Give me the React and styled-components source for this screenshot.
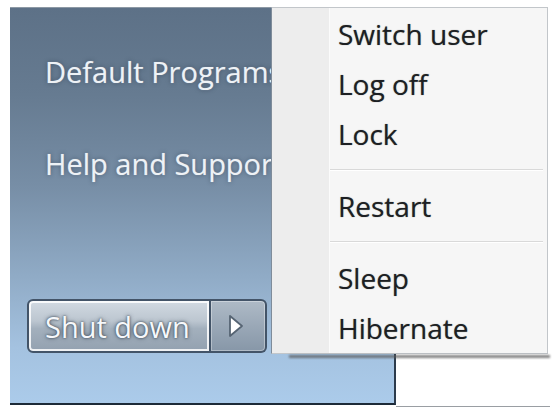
import React from "react";
import styled, { createGlobalStyle } from "styled-components";

const Global = createGlobalStyle`
  html, body { margin: 0; padding: 0; background: #ffffff; }
  body {
    width: 554px;
    height: 412px;
    overflow: hidden;
    font-family: "Open Sans", "Noto Sans", sans-serif;
  }
`;

const Screen = styled.div`
  position: relative;
  width: 554px;
  height: 412px;
  box-sizing: border-box;
  padding: 7px 4px 0 10px;
  display: flex;
  align-items: flex-start;
  background: #ffffff;
`;

const StartPane = styled.div`
  width: 386px;
  height: 398px;
  box-sizing: border-box;
  border-right: 2px solid #2c3b4c;
  border-bottom: 2px solid #1d2a38;
  border-top: 1px solid #8c98a4;
  background: linear-gradient(
    180deg,
    #5d7187 0%,
    #667b91 22%,
    #778ea6 45%,
    #90abc6 68%,
    #a4c2e0 86%,
    #abcbea 100%
  );
  display: flex;
  flex-direction: column;
  gap: 52px;
  padding: 44px 0 50px;
`;

const PlaceLink = styled.div`
  padding-left: 35px;
  height: 40px;
  line-height: 40px;
  font-size: 29px;
  color: #eef2f6;
  white-space: nowrap;
  text-shadow: 0 0 4px rgba(35, 50, 68, 0.55), 0 0 1px rgba(240, 245, 250, 0.6);
`;

const ShutdownGroup = styled.div`
  margin-top: auto;
  margin-left: 17px;
  display: flex;
  height: 54px;
`;

const ShutdownButton = styled.div`
  width: 184px;
  height: 54px;
  box-sizing: border-box;
  border: 2px solid #435468;
  border-radius: 6px 0 0 6px;
  background: linear-gradient(
    180deg,
    #d2dae2 0%,
    #bcc6d0 40%,
    #a3b0bd 55%,
    #93a1b0 100%
  );
  box-shadow: inset 0 0 0 2px rgba(255, 255, 255, 0.85);
  display: flex;
  align-items: center;
  padding-left: 16px;
  font-size: 29px;
  line-height: 1;
  color: #f6f8fb;
  text-shadow: 0 0 2px #3b4857, 0 0 4px rgba(40, 52, 66, 0.7);
  white-space: nowrap;
`;

const ArrowButton = styled.div`
  width: 56px;
  height: 54px;
  box-sizing: border-box;
  border: 2px solid #435468;
  border-left: 0;
  border-radius: 0 6px 6px 0;
  background: linear-gradient(180deg, #aebac6 0%, #9aa8b7 50%, #8797a8 100%);
  box-shadow: inset 0 0 0 1px rgba(255, 255, 255, 0.35);
  display: flex;
  align-items: center;
  justify-content: center;
  padding-right: 4px;

  svg {
    width: 16px;
    height: 24px;
    flex: none;
  }
`;

const RightPane = styled.div`
  flex: 1;
  height: 400px;
  box-sizing: border-box;
  background: #ffffff;
  border-bottom: 1px solid #9a9ea3;
`;

const PowerMenu = styled.div`
  position: absolute;
  left: 271px;
  top: 7px;
  width: 277px;
  box-sizing: border-box;
  border: 1px solid #c2c6ca;
  border-left-color: #7f8c9a;
  background: #f6f6f6;
  display: flex;

  &::after {
    content: "";
    position: absolute;
    left: 17px;
    right: -3px;
    top: calc(100% + 2px);
    height: 3px;
    background: rgba(90, 90, 90, 0.75);
    filter: blur(0.8px);
  }
`;

const Gutter = styled.div`
  width: 57px;
  flex: none;
  background: #ededed;
  border-right: 1px solid #fbfbfb;
`;

const MenuList = styled.div`
  flex: 1;
  display: flex;
  flex-direction: column;
  padding-top: 1px;
`;

const MenuItem = styled.div`
  height: 50px;
  line-height: 50px;
  padding-left: 8px;
  font-size: 28px;
  color: #1c1f23;
  white-space: nowrap;
  text-shadow: 0 0 1px rgba(20, 24, 28, 0.55);
`;

const Separator = styled.div`
  margin: 10px 4px 10px 0;
  height: 0;
  border-top: 1px solid #d9d9d9;
  border-bottom: 1px solid #ffffff;
`;

const groups = [
  ["Switch user", "Log off", "Lock"],
  ["Restart"],
  ["Sleep", "Hibernate"],
];

function Triangle() {
  return (
    <svg viewBox="0 0 16 24">
      <polygon
        points="2,2 14,12 2,22"
        fill="#ffffff"
        stroke="#566473"
        strokeWidth="1.8"
        strokeLinejoin="round"
      />
    </svg>
  );
}

export default function App() {
  return (
    <>
      <Global />
      <Screen>
        <StartPane>
          <PlaceLink>Default Programs</PlaceLink>
          <PlaceLink>Help and Support</PlaceLink>
          <ShutdownGroup>
            <ShutdownButton>Shut down</ShutdownButton>
            <ArrowButton>
              <Triangle />
            </ArrowButton>
          </ShutdownGroup>
        </StartPane>
        <RightPane />
        <PowerMenu>
          <Gutter />
          <MenuList>
            {groups.map((g, gi) => (
              <React.Fragment key={gi}>
                {gi > 0 && <Separator />}
                {g.map((item) => (
                  <MenuItem key={item}>{item}</MenuItem>
                ))}
              </React.Fragment>
            ))}
          </MenuList>
        </PowerMenu>
      </Screen>
    </>
  );
}
